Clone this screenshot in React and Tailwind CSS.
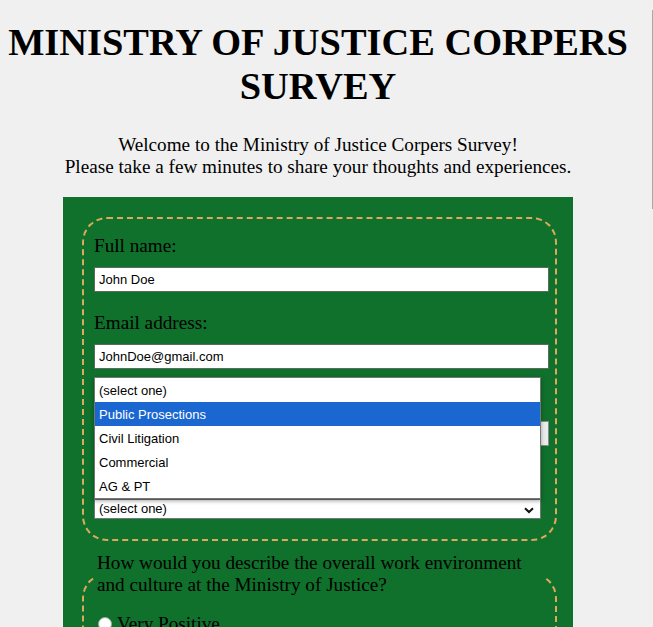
import React from 'react';

const UNITS = ['(select one)', 'Public Prosections', 'Civil Litigation', 'Commercial', 'AG & PT'];

const RATINGS = ['Very Positive', 'Positive', 'Neutral', 'Negative', 'Very Negative'];

function Chevron() {
  return (
    <svg width="10" height="7" viewBox="0 0 10 7" className="absolute right-[6px] top-[7px]">
      <path d="M1 1.2 L5 5 L9 1.2" fill="none" stroke="#111" strokeWidth="2" />
    </svg>
  );
}

export default function App() {
  return (
    <div className="relative h-[627px] w-[653px] overflow-hidden bg-[#f0f0f0] font-['Liberation_Serif',serif] text-[19.2px] leading-[normal] text-black">
      {/* thin scrollbar edge at the right */}
      <div className="absolute right-0 top-[10px] h-[199px] w-px bg-[#a8a8a8]" />

      <div className="w-[636px]">
        <h1 className="mt-[20px] text-center text-[38.4px] font-bold leading-[1.149]">
          MINISTRY OF JUSTICE CORPERS SURVEY
        </h1>
        <p className="mt-[26px] text-center">
          Welcome to the Ministry of Justice Corpers Survey!
          <br />
          Please take a few minutes to share your thoughts and experiences.
        </p>

        <form className="mx-auto mt-[19px] w-[510px] bg-[#0f712b] pb-10 pt-[20px]">
          <fieldset className="relative ml-[19px] w-[475px] rounded-[25px] border-2 border-dashed border-[#dcaa5c] pb-[20px] pl-[10px] pt-[16px]">
            <label className="block">Full name:</label>
            <input
              type="text"
              defaultValue="John Doe"
              className="mt-[10px] block h-[25px] w-[455px] border border-[#5c6b5e] bg-white px-[4px] font-['Liberation_Sans',Arial,sans-serif] text-[13px] text-black"
            />

            <label className="mt-[20px] block">Email address:</label>
            <input
              type="email"
              defaultValue="JohnDoe@gmail.com"
              className="mt-[10px] block h-[25px] w-[455px] border border-[#5c6b5e] bg-white px-[4px] font-['Liberation_Sans',Arial,sans-serif] text-[13px] text-black"
            />

            <label className="mt-[20px] block">Department:</label>
            <div className="mt-[10px] h-[25px] w-[455px] border border-[#8a8a8a] bg-[#ececec]" />

            <label className="mt-[20px] block">Unit:</label>
            <div className="relative mt-[11px] h-[20px] w-[447px] border border-[#767676] bg-white px-[4px] font-['Liberation_Sans',Arial,sans-serif] text-[13px] leading-[18px]">
              (select one)
              <Chevron />
            </div>

            {/* open listbox of the unit select */}
            <ul className="absolute left-[10px] top-[158px] w-[447px] border border-[#767676] bg-white font-['Liberation_Sans',Arial,sans-serif] text-[13px] leading-[normal] shadow-[0_2px_4px_rgba(0,0,0,0.35)]">
              {UNITS.map((u, i) => (
                <li
                  key={u}
                  className={`flex h-[24px] items-center px-[4px] ${i === 1 ? 'bg-[#1a67d2] text-white' : 'text-black'}`}
                >
                  {u}
                </li>
              ))}
            </ul>
          </fieldset>

          <fieldset className="ml-[19px] mt-[11px] w-[475px] rounded-[25px] border-2 border-dashed border-[#dcaa5c] px-[11px] pb-[20px]">
            <legend className="px-[2px]">
              How would you describe the overall work environment and culture at the Ministry of Justice?
            </legend>
            <div className="flex flex-col gap-[6px] pt-[17px]">
              {RATINGS.map((r) => (
                <label key={r} className="flex items-center">
                  <span className="ml-[3px] h-[14px] w-[14px] rounded-full border border-[#9aa89c] bg-white" />
                  <span className="ml-[5px]">{r}</span>
                </label>
              ))}
            </div>
          </fieldset>
        </form>
      </div>
    </div>
  );
}
